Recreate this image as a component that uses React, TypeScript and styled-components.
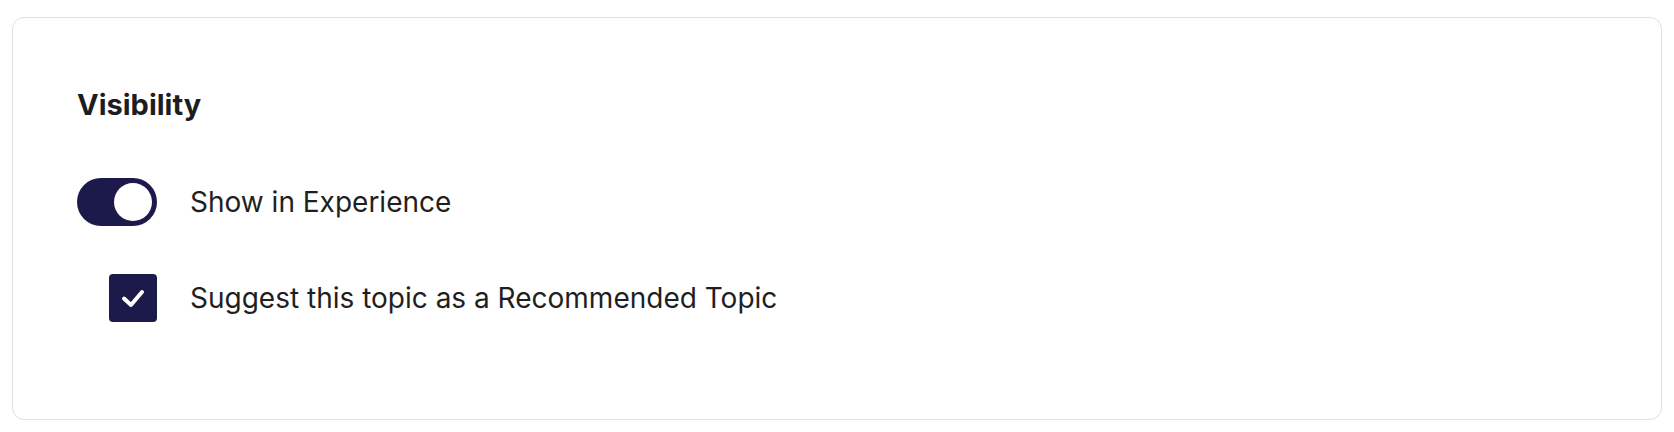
import React, { useState } from "react";
import styled, { createGlobalStyle } from "styled-components";

const Global = createGlobalStyle`
  html, body { margin: 0; padding: 0; background: #ffffff; }
  body { font-family: Inter, "Noto Sans", sans-serif; color: #1f1f23; }
`;

const Page = styled.div`
  padding: 17px 12px 12px 12px;
`;

const Card = styled.section`
  border: 1.5px solid #dfdfe9;
  border-radius: 12px;
  padding: 71px 64px 97px 64px;
  background: #fff;
`;

const Heading = styled.h2`
  margin: 0;
  font-family: Inter, sans-serif;
  font-weight: 700;
  font-size: 29px;
  line-height: 32px;
  color: #1d1d21;
`;

const Options = styled.div`
  margin-top: 57px;
  display: flex;
  flex-direction: column;
  gap: 48px;
`;

const Row = styled.label<{ $indent?: number }>`
  display: flex;
  align-items: center;
  gap: 33px;
  height: 48px;
  padding-left: ${(p) => p.$indent ?? 0}px;
  cursor: pointer;
`;

const Track = styled.span<{ $on: boolean }>`
  box-sizing: border-box;
  width: 80px;
  height: 48px;
  border-radius: 24px;
  background: ${(p) => (p.$on ? "#1b1a4a" : "#c9c9d6")};
  display: flex;
  align-items: center;
  justify-content: ${(p) => (p.$on ? "flex-end" : "flex-start")};
  padding: 5px;
  flex-shrink: 0;
`;

const Knob = styled.span`
  width: 38px;
  height: 38px;
  border-radius: 50%;
  background: #ffffff;
`;

const Box = styled.span<{ $checked: boolean }>`
  width: 48px;
  height: 48px;
  border-radius: 4px;
  background: ${(p) => (p.$checked ? "#1b1a4a" : "#fff")};
  display: flex;
  align-items: center;
  justify-content: center;
  flex-shrink: 0;
`;

const LabelText = styled.span`
  font-size: 28px;
  line-height: 34px;
  font-weight: 400;
  color: #1f1f23;
`;

export default function App() {
  const [show, setShow] = useState(true);
  const [suggest, setSuggest] = useState(true);
  return (
    <>
      <Global />
      <Page>
        <Card>
          <Heading>Visibility</Heading>
          <Options>
            <Row onClick={() => setShow(!show)}>
              <Track $on={show}>
                <Knob />
              </Track>
              <LabelText>Show in Experience</LabelText>
            </Row>
            <Row $indent={32} onClick={() => setSuggest(!suggest)}>
              <Box $checked={suggest}>
                {suggest && (
                  <svg width="26" height="20" viewBox="0 0 26 20" fill="none">
                    <path d="M4 10.5l7 6.5L22 4" stroke="#fff" strokeWidth="4" strokeLinecap="round" strokeLinejoin="round" />
                  </svg>
                )}
              </Box>
              <LabelText>Suggest this topic as a Recommended Topic</LabelText>
            </Row>
          </Options>
        </Card>
      </Page>
    </>
  );
}
